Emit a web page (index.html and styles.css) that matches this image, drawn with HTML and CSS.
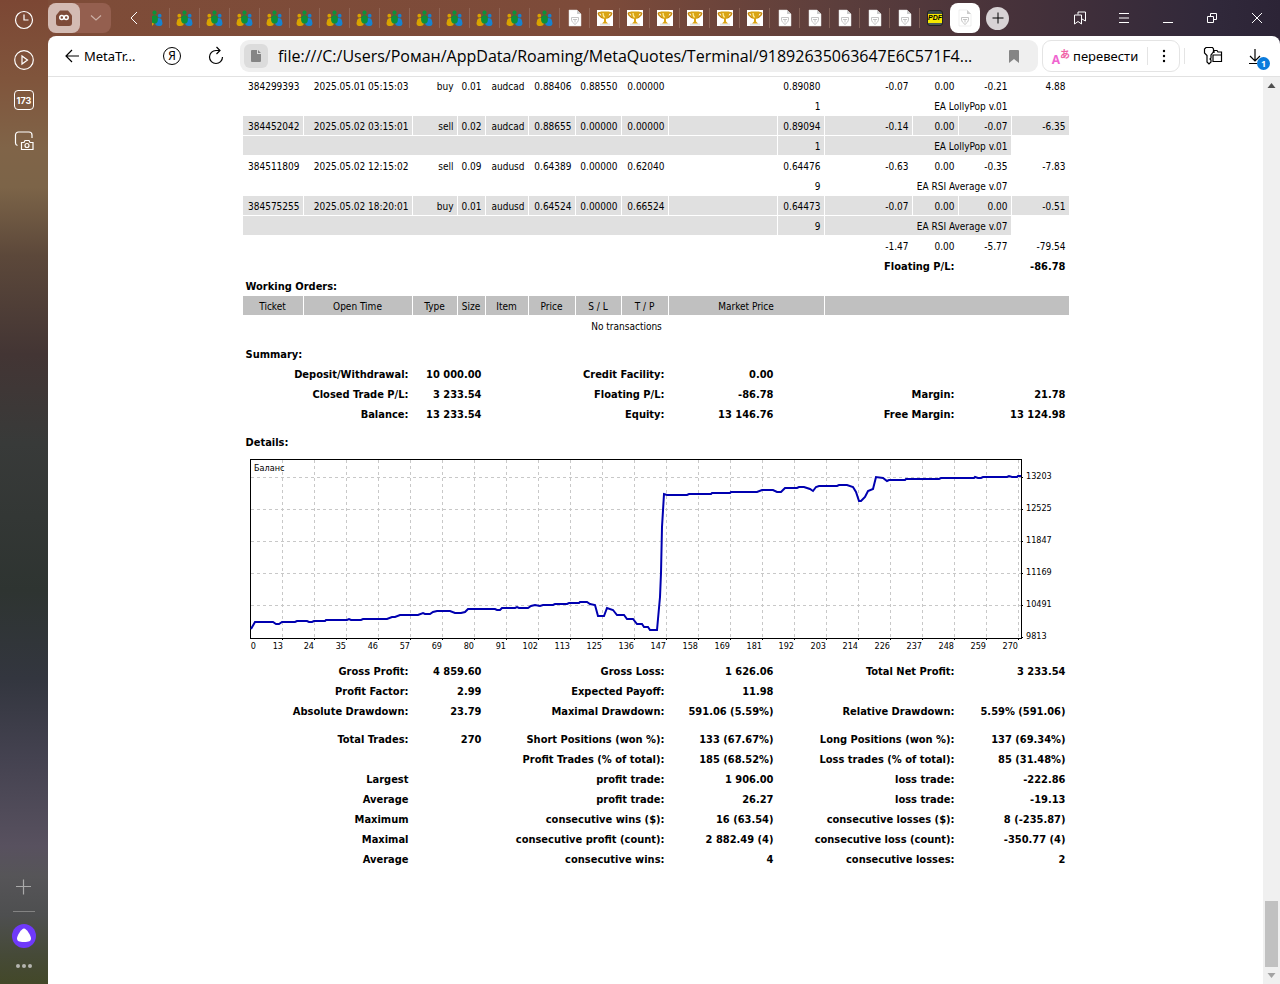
FILE: index.html
```html
<!DOCTYPE html>
<html lang="ru">
    <head>
        <meta charset="UTF-8" />
        <meta name="viewport" content="width=device-width, initial-scale=1.0" />
        <title>MetaTrader Statement</title>
        <link rel="stylesheet" href="styles.css">
    </head>
    <body>
        <svg class="defs" aria-hidden="true">
            <symbol id="people" viewBox="0 0 18 18">
                <circle cx="3.5" cy="6" r="2" fill="#d9a300" />
                <circle cx="14.5" cy="6" r="2" fill="#1583d0" />
                <path d="M1 12c0-2 1.500-3.500 3.500-3.500S8 10.500 8.500 13c0 3-1.500 4-4 4S.5 16 .5 14z" fill="#d9a300" />
                <path d="M17 12c0-2-1.500-3.500-3.500-3.500S10 10.500 9.500 13c0 3 1.500 4 4 4s4-1 4-3z" fill="#1583d0" />
                <circle cx="9" cy="2.800" r="2.200" fill="#0c9038" />
                <ellipse cx="9" cy="10" rx="3.6" ry="4.4" fill="#0c9038" />
            </symbol>
            <symbol id="doc" viewBox="0 0 16 18">
                <path d="M2 1h8l4 4v12H2z" fill="#fff" stroke="#ddd" stroke-width="0.5" />
                <path d="M10 1v4h4z" fill="#ccc" />
                <path d="M4.500 8.500h7v1.500c0 3-2 4-3.500 5.500-1.500-1.500-3.500-2.500-3.500-5.500zM6 10.500h4M8 10.500v3" fill="none" stroke="#c4c4c4" />
            </symbol>
            <symbol id="cup" viewBox="0 0 16 16">
                <path d="M0 0h16v16H0z" fill="#fff" />
                <path d="M3 13.500h10v2H3z" fill="#e4e4e4" />
                <path d="M4.500 3C1 2 .8 3.500 2 5s2.500 2.500 4.500 3M11.500 3C15 2 15.200 3.500 14 5s-2.500 2.500-4.500 3" fill="none" stroke="#c98a0a" stroke-width="1.500" />
                <path d="M3.500 1.500h9C12.500 6 11 8 9 9v2.500l2 2H5l2-2V9C5 8 3.500 6 3.500 1.500z" fill="#d9a413" />
                <path d="M6 3c0 2 .5 3.500 1.500 4.500" fill="none" stroke="#fff0a0" stroke-width="1.200" />
            </symbol>
        </svg>

        <nav class="sidebar">
            <button aria-label="История">
                <svg width="20" height="20"><circle cx="10" cy="10" r="8.500" /><path d="M10 4.500V10h4.500" /></svg>
            </button>
            <button aria-label="Видео">
                <svg width="20" height="20"><circle cx="10" cy="10" r="9.300" /><path d="M8 6v8l5.500-4z" /></svg>
            </button>
            <button class="counter">173</button>
            <button aria-label="Скриншот">
                <svg width="20" height="20"><path d="M3.500 15.500C1.500 15 1.500 14 1.500 13V5a3 3 0 0 1 3-3H15a3 3 0 0 1 3 3v3" /><path d="M7.500 12.500H10l1-2h4l1 2h3v7H7.500z" /><circle cx="13" cy="15.500" r="2" /></svg>
            </button>
            <div class="sidebar-bottom">
                <button aria-label="Добавить" class="dim">
                    <svg width="20" height="20"><path d="M9.500 2.500v15M2 9.500h15" /></svg>
                </button>
                <hr>
                <button aria-label="Алиса">
                    <svg width="24" height="24"><circle cx="12" cy="12" r="12" class="alice" /><path d="M12 4.500c2.500 0 7 7 7 10 0 2.500-2 3.500-7 3.500s-7-1-7-3.500c0-3 4.500-10 7-10z" class="white" /></svg>
                </button>
                <button aria-label="Ещё">
                    <svg width="20" height="20" class="dots"><circle cx="4" cy="10" r="2" /><circle cx="10" cy="10" r="2" /><circle cx="16" cy="10" r="2" /></svg>
                </button>
            </div>
        </nav>

        <div class="browser">
            <header class="tabs">
                <div class="group">
                    <button aria-label="Группа" class="group-icon">
                        <svg width="18" height="18"><path d="M5 1.500h8l4 5V14a3 3 0 0 1-3 3H4a3 3 0 0 1-3-3V6.500z" fill="#7d4a38" /><circle cx="6.800" cy="8.500" r="2" /><circle cx="11.200" cy="8.500" r="2" /></svg>
                    </button>
                    <button aria-label="Список" class="group-list">
                        <svg width="12" height="8"><path d="M1 1.500l5 4.500 5-4.500" /></svg>
                    </button>
                </div>
                <button aria-label="Назад" class="prev">
                    <svg width="10" height="16"><path d="M8 2L2 8l6 6" /></svg>
                </button>
                <button class="tab half"><svg width="17" height="17"><use href="#people" /></svg></button>
                <button class="tab"><svg width="17" height="17"><use href="#people" /></svg></button>
                <button class="tab"><svg width="17" height="17"><use href="#people" /></svg></button>
                <button class="tab"><svg width="17" height="17"><use href="#people" /></svg></button>
                <button class="tab"><svg width="17" height="17"><use href="#people" /></svg></button>
                <button class="tab"><svg width="17" height="17"><use href="#people" /></svg></button>
                <button class="tab"><svg width="17" height="17"><use href="#people" /></svg></button>
                <button class="tab"><svg width="17" height="17"><use href="#people" /></svg></button>
                <button class="tab"><svg width="17" height="17"><use href="#people" /></svg></button>
                <button class="tab"><svg width="17" height="17"><use href="#people" /></svg></button>
                <button class="tab"><svg width="17" height="17"><use href="#people" /></svg></button>
                <button class="tab"><svg width="17" height="17"><use href="#people" /></svg></button>
                <button class="tab"><svg width="17" height="17"><use href="#people" /></svg></button>
                <button class="tab"><svg width="17" height="17"><use href="#people" /></svg></button>
                <button class="tab"><svg width="16" height="18"><use href="#doc" /></svg></button>
                <button class="tab"><svg width="16" height="16"><use href="#cup" /></svg></button>
                <button class="tab"><svg width="16" height="16"><use href="#cup" /></svg></button>
                <button class="tab"><svg width="16" height="16"><use href="#cup" /></svg></button>
                <button class="tab"><svg width="16" height="16"><use href="#cup" /></svg></button>
                <button class="tab"><svg width="16" height="16"><use href="#cup" /></svg></button>
                <button class="tab"><svg width="16" height="16"><use href="#cup" /></svg></button>
                <button class="tab"><svg width="16" height="18"><use href="#doc" /></svg></button>
                <button class="tab"><svg width="16" height="18"><use href="#doc" /></svg></button>
                <button class="tab"><svg width="16" height="18"><use href="#doc" /></svg></button>
                <button class="tab"><svg width="16" height="18"><use href="#doc" /></svg></button>
                <button class="tab"><svg width="16" height="18"><use href="#doc" /></svg></button>
                <button class="tab last"><span class="pdf">PDF</span></button>
                <button class="tab active"><svg width="16" height="18"><use href="#doc" /></svg></button>
                <button class="new-tab" aria-label="Новая вкладка">
                    <svg width="12" height="12"><path d="M6 0.500v11M0.500 6h11" /></svg>
                </button>
                <div class="window-buttons">
                    <button aria-label="Закладки"><svg width="14" height="16"><path d="M1.500 5h7v9L5 11.500 1.500 14zM5 4.500V2h7.500v9L9 9" /></svg></button>
                    <button aria-label="Меню"><svg width="14" height="16"><path d="M2 3.500h10M2 8h10M2 12.500h10" /></svg></button>
                    <button aria-label="Свернуть"><svg width="14" height="16"><path d="M2 12.500h10" /></svg></button>
                    <button aria-label="Развернуть"><svg width="14" height="16"><path d="M2.500 6.500h6v6h-6zM5.500 6V3.500h6v6H9" /></svg></button>
                    <button aria-label="Закрыть"><svg width="14" height="16"><path d="M2 3l10 10M12 3L2 13" /></svg></button>
                </div>
            </header>

            <div class="window">
                <div class="toolbar">
                    <a href="#" class="back">
                        <svg width="16" height="16"><path d="M15 8H2M8 2L2 8l6 6" /></svg>
                        MetaTr...
                    </a>
                    <button class="yandex" aria-label="Яндекс"><span>Я</span></button>
                    <button class="reload" aria-label="Обновить">
                        <svg width="18" height="20"><path d="M9 4.500a6.500 6.500 0 1 0 6.500 6.500M9 4.500h3.500M9.500 1l3.500 3.500-3.500 3.500" /></svg>
                    </button>
                    <div class="address">
                        <span class="page-icon"><svg width="12" height="14"><path d="M1 2a1 1 0 0 1 1-1h5v4h4v7a1 1 0 0 1-1 1H2a1 1 0 0 1-1-1zM8 1l3 3H8z" /></svg></span>
                        <input type="text" aria-label="Адрес" value="file:///C:/Users/Роман/AppData/Roaming/MetaQuotes/Terminal/91892635063647E6C571F4...">
                        <svg width="12" height="14" class="mark"><path d="M1 2a1 1 0 0 1 1-1h8a1 1 0 0 1 1 1v12l-5-4-5 4z" /></svg>
                    </div>
                    <div class="translate">
                        <button class="translate-text"><span class="latin">A</span><span class="kana">あ</span>перевести</button>
                        <button class="more" aria-label="Ещё"><svg width="4" height="14"><circle cx="2" cy="2" r="1.200" /><circle cx="2" cy="7" r="1.200" /><circle cx="2" cy="12" r="1.200" /></svg></button>
                    </div>
                    <button class="passwords" aria-label="Пароли">
                        <svg width="20" height="20"><path d="M9.500 7L10.500 5.500V3L9.500 1.500H3L1.500 3v4L4 9.500V16l2 2 2-2v-2L7 13l1-1V9zM11 7V4.500h3l1 1.500h3.500v9.500H10V9h8" /></svg>
                    </button>
                    <button class="downloads" aria-label="Загрузки">
                        <svg width="14" height="18"><path d="M7 2v12M2 9l5 5 5-5M1 16.500h8" /></svg>
                        <span class="badge">1</span>
                    </button>
                </div>

                <div class="page">
                    <main>
                        <table>
                            <colgroup>
                                <col class="ticket"><col class="time"><col class="type"><col class="size"><col class="item">
                                <col class="price"><col class="sl"><col class="price"><col class="time"><col class="price">
                                <col class="commission"><col class="sl"><col class="swap"><col class="profit">
                            </colgroup>
                            <tbody>
                                <tr><td>384299393</td><td>2025.05.01 05:15:03</td><td>buy</td><td>0.01</td><td>audcad</td><td>0.88406</td><td>0.88550</td><td>0.00000</td><td></td><td>0.89080</td><td>-0.07</td><td>0.00</td><td>-0.21</td><td>4.88</td></tr>
                                <tr><td colspan="9"></td><td>1</td><td colspan="3">EA LollyPop v.01</td><td></td></tr>
                                <tr class="gray"><td>384452042</td><td>2025.05.02 03:15:01</td><td>sell</td><td>0.02</td><td>audcad</td><td>0.88655</td><td>0.00000</td><td>0.00000</td><td></td><td>0.89094</td><td>-0.14</td><td>0.00</td><td>-0.07</td><td>-6.35</td></tr>
                                <tr class="gray"><td colspan="9"></td><td>1</td><td colspan="3">EA LollyPop v.01</td></tr>
                                <tr><td>384511809</td><td>2025.05.02 12:15:02</td><td>sell</td><td>0.09</td><td>audusd</td><td>0.64389</td><td>0.00000</td><td>0.62040</td><td></td><td>0.64476</td><td>-0.63</td><td>0.00</td><td>-0.35</td><td>-7.83</td></tr>
                                <tr><td colspan="9"></td><td>9</td><td colspan="3">EA RSI Average v.07</td><td></td></tr>
                                <tr class="gray"><td>384575255</td><td>2025.05.02 18:20:01</td><td>buy</td><td>0.01</td><td>audusd</td><td>0.64524</td><td>0.00000</td><td>0.66524</td><td></td><td>0.64473</td><td>-0.07</td><td>0.00</td><td>0.00</td><td>-0.51</td></tr>
                                <tr class="gray"><td colspan="9"></td><td>9</td><td colspan="3">EA RSI Average v.07</td></tr>
                                <tr><td colspan="10"></td><td>-1.47</td><td>0.00</td><td>-5.77</td><td>-79.54</td></tr>
                                <tr class="bold"><td colspan="10"></td><td colspan="2">Floating P/L:</td><td colspan="2">-86.78</td></tr>
                                <tr class="bold title"><td colspan="14">Working Orders:</td></tr>
                                <tr class="head"><th>Ticket</th><th>Open Time</th><th>Type</th><th>Size</th><th>Item</th><th>Price</th><th>S / L</th><th>T / P</th><th colspan="2">Market Price</th><th colspan="4"></th></tr>
                                <tr class="center"><td colspan="13">No transactions</td><td></td></tr>
                                <tr class="gap"><td colspan="14"></td></tr>
                                <tr class="bold title"><td colspan="14">Summary:</td></tr>
                                <tr class="bold"><td colspan="2">Deposit/Withdrawal:</td><td colspan="2">10 000.00</td><td colspan="4">Credit Facility:</td><td>0.00</td><td colspan="5"></td></tr>
                                <tr class="bold"><td colspan="2">Closed Trade P/L:</td><td colspan="2">3 233.54</td><td colspan="4">Floating P/L:</td><td>-86.78</td><td colspan="3">Margin:</td><td colspan="2">21.78</td></tr>
                                <tr class="bold"><td colspan="2">Balance:</td><td colspan="2">13 233.54</td><td colspan="4">Equity:</td><td>13 146.76</td><td colspan="3">Free Margin:</td><td colspan="2">13 124.98</td></tr>
                                <tr class="gap"><td colspan="14"></td></tr>
                                <tr class="bold title"><td colspan="14">Details:</td></tr>
                                <tr class="chart">
                                    <td colspan="14">
                                        <svg viewBox="0 0 820 202" width="820" height="202">
                                            <path class="grid" d="M5 22.500h770M5 54.500h770M5 86.500h770M5 118.500h770M5 150.500h770" />
                                            <path class="grid" d="M36.500 5v178M68.500 5v178M100.500 5v178M132.500 5v178M164.500 5v178M196.500 5v178M228.500 5v178M260.500 5v178M292.500 5v178M324.500 5v178M356.500 5v178M388.500 5v178M420.500 5v178M452.500 5v178M484.500 5v178M516.500 5v178M548.500 5v178M580.500 5v178M612.500 5v178M644.500 5v178M676.500 5v178M708.500 5v178M740.500 5v178M772.500 5v178" />
                                            <rect class="frame" x="4.500" y="4.500" width="771" height="179" />
                                            <path class="frame" d="M775 22.500h2M775 54.500h2M775 86.500h2M775 118.500h2M775 150.500h2M775 182.500h2" />
                                            <path class="frame" d="M36.500 183v2M68.500 183v2M100.500 183v2M132.500 183v2M164.500 183v2M196.500 183v2M228.500 183v2M260.500 183v2M292.500 183v2M324.500 183v2M356.500 183v2M388.500 183v2M420.500 183v2M452.500 183v2M484.500 183v2M516.500 183v2M548.500 183v2M580.500 183v2M612.500 183v2M644.500 183v2M676.500 183v2M708.500 183v2M740.500 183v2M772.500 183v2" />
                                            <polyline class="balance" points="5,174 9,167 27,167 30,169 33,169 36,167 49,167 51,166 61,166 63,167 66,167 68,166 79,166 80,165 101,165 103,164 105,165 115,165 117,164 141,164 146,162 149,162 154,160 172,160 177,158 179,159 184,159 187,157 191,156 204,156 209,158 215,158 219,157 222,154 249,154 251,155 254,155 256,153 269,153 271,152 273,153 282,153 285,151 289,150 294,151 297,150 307,150 309,149 321,149 323,148 333,148 334,147 341,147 344,149 349,150 352,161 358,161 361,153 367,155 371,160 378,160 381,164 387,164 391,169 396,169 398,172 402,172 404,175 411,175 412,164 414,142 415,118 416,72 418,39 421,40 441,40 443,39 465,39 466,38 484,38 485,37 511,37 516,35 527,35 531,37 535,37 539,33 551,33 553,32 558,32 564,34 567,36 570,32 573,31 591,31 593,30 601,30 607,32 610,37 613,46 615,46 619,42 622,36 627,34 630,22 637,23 641,26 643,25 659,25 660,24 693,24 695,23 728,23 729,22 732,23 735,23 737,22 761,22 763,21 766,22 771,22 772,21 775,21" />
                                            <text x="8" y="16">Баланс</text>
                                            <g>
                                                <text x="780" y="24">13203</text><text x="780" y="56">12525</text><text x="780" y="88">11847</text><text x="780" y="120">11169</text><text x="780" y="152">10491</text><text x="780" y="184">9813</text>
                                            </g>
                                            <g text-anchor="end">
                                                <text x="10" y="194">0</text><text x="37" y="194">13</text><text x="68" y="194">24</text><text x="100" y="194">35</text><text x="132" y="194">46</text><text x="164" y="194">57</text><text x="196" y="194">69</text><text x="228" y="194">80</text><text x="260" y="194">91</text><text x="292" y="194">102</text><text x="324" y="194">113</text><text x="356" y="194">125</text><text x="388" y="194">136</text><text x="420" y="194">147</text><text x="452" y="194">158</text><text x="484" y="194">169</text><text x="516" y="194">181</text><text x="548" y="194">192</text><text x="580" y="194">203</text><text x="612" y="194">214</text><text x="644" y="194">226</text><text x="676" y="194">237</text><text x="708" y="194">248</text><text x="740" y="194">259</text><text x="772" y="194">270</text>
                                            </g>
                                        </svg>
                                    </td>
                                </tr>
                                <tr class="bold"><td colspan="2">Gross Profit:</td><td colspan="2">4 859.60</td><td colspan="4">Gross Loss:</td><td>1 626.06</td><td colspan="3">Total Net Profit:</td><td colspan="2">3 233.54</td></tr>
                                <tr class="bold"><td colspan="2">Profit Factor:</td><td colspan="2">2.99</td><td colspan="4">Expected Payoff:</td><td>11.98</td><td colspan="5"></td></tr>
                                <tr class="bold"><td colspan="2">Absolute Drawdown:</td><td colspan="2">23.79</td><td colspan="4">Maximal Drawdown:</td><td>591.06 (5.59%)</td><td colspan="3">Relative Drawdown:</td><td colspan="2">5.59% (591.06)</td></tr>
                                <tr class="gap"><td colspan="14"></td></tr>
                                <tr class="bold"><td colspan="2">Total Trades:</td><td colspan="2">270</td><td colspan="4">Short Positions (won %):</td><td>133 (67.67%)</td><td colspan="3">Long Positions (won %):</td><td colspan="2">137 (69.34%)</td></tr>
                                <tr class="bold"><td colspan="4"></td><td colspan="4">Profit Trades (% of total):</td><td>185 (68.52%)</td><td colspan="3">Loss trades (% of total):</td><td colspan="2">85 (31.48%)</td></tr>
                                <tr class="bold"><td colspan="2">Largest</td><td colspan="2"></td><td colspan="4">profit trade:</td><td>1 906.00</td><td colspan="3">loss trade:</td><td colspan="2">-222.86</td></tr>
                                <tr class="bold"><td colspan="2">Average</td><td colspan="2"></td><td colspan="4">profit trade:</td><td>26.27</td><td colspan="3">loss trade:</td><td colspan="2">-19.13</td></tr>
                                <tr class="bold"><td colspan="2">Maximum</td><td colspan="2"></td><td colspan="4">consecutive wins ($):</td><td>16 (63.54)</td><td colspan="3">consecutive losses ($):</td><td colspan="2">8 (-235.87)</td></tr>
                                <tr class="bold"><td colspan="2">Maximal</td><td colspan="2"></td><td colspan="4">consecutive profit (count):</td><td>2 882.49 (4)</td><td colspan="3">consecutive loss (count):</td><td colspan="2">-350.77 (4)</td></tr>
                                <tr class="bold"><td colspan="2">Average</td><td colspan="2"></td><td colspan="4">consecutive wins:</td><td>4</td><td colspan="3">consecutive losses:</td><td colspan="2">2</td></tr>
                            </tbody>
                        </table>
                    </main>
                    <div class="scrollbar">
                        <svg width="9" height="17"><path d="M0.500 11h8l-4-5z" fill="#505050" /></svg>
                        <div class="thumb"></div>
                        <svg width="9" height="17"><path d="M0.500 6h8l-4 5z" fill="#a3a3a3" /></svg>
                    </div>
                </div>
            </div>
        </div>
    </body>
</html>
```

FILE: styles.css
```css
* {
    box-sizing: border-box;
}
body {
    margin: 0;
    height: 100vh;
    display: flex;
    overflow: hidden;
    background-color: #7c4936;
    font-family: "Noto Sans", sans-serif;
}
button {
    display: flex;
    align-items: center;
    justify-content: center;
    padding: 0;
    border: none;
    background: none;
    color: inherit;
    font-family: inherit;
}
svg {
    display: block;
    flex: none;
    fill: none;
    stroke: black;
}
.defs {
    position: absolute;
    width: 0;
    height: 0;
}

/* left panel */
.sidebar {
    flex: none;
    width: 48px;
    display: flex;
    flex-direction: column;
    align-items: center;
    background: linear-gradient(#7c4734 0%, #80553c 8%, #806448 15%, #7c6448 19%, #5c483a 26%, #433534 36%, #383a39 45%, #2e3431 60%, #33363f 69%, #444250 77%, #58515f 86%, #565558 89%, #4e4f50 93%, #464a38 97%, #434829 100%);
}
.sidebar svg {
    stroke: white;
    stroke-width: 1.2;
}
.sidebar button {
    width: 40px;
    height: 40px;
}
.sidebar .counter {
    width: 20px;
    height: 20px;
    margin: 10px 0;
    border: 1px solid white;
    border-radius: 4px;
    color: white;
    font: bold 9px Inter, sans-serif;
}
.sidebar-bottom {
    margin-top: auto;
    display: flex;
    flex-direction: column;
    align-items: center;
}
.sidebar-bottom hr {
    width: 22px;
    height: 1px;
    margin: 4px 0;
    border: none;
    background-color: #838383;
}
.sidebar-bottom .dim svg {
    stroke: #aaa;
}
.sidebar-bottom .alice {
    fill: #6f39fa;
    stroke: none;
}
.sidebar-bottom .white {
    fill: white;
    stroke: none;
}
.sidebar-bottom button:last-child {
    height: 28px;
    padding-bottom: 8px;
}
.sidebar .dots {
    fill: #b5b5b0;
    stroke: none;
}

/* tabs */
.browser {
    flex: 1;
    min-width: 0;
    display: flex;
    flex-direction: column;
    background: linear-gradient(90deg, #7e4c38 0%, #7d4b3a 45%, #5c3e3c 64%, #47323a 78%, #30283a 95%, #2c2436 100%);
}
.tabs {
    height: 36px;
    flex: none;
    display: flex;
    align-items: center;
}
.group {
    display: flex;
    width: 63px;
    height: 30px;
    border-radius: 8px;
    background-color: #945f4f;
}
.group-icon {
    width: 32px;
    border-radius: 8px;
    background-color: #d3bbb3;
}
.group-icon svg {
    stroke: #7d4a38;
    stroke-width: 0;
}
.group-icon circle {
    stroke: white;
    stroke-width: 1.5;
}
.group-list {
    flex: 1;
}
.group-list svg {
    stroke: #cbb0a6;
    stroke-width: 1.2;
}
.prev {
    width: 41px;
    height: 30px;
    padding-left: 4px;
}
.prev svg,
.window-buttons svg {
    stroke: white;
}
.tab {
    width: 30px;
    height: 20px;
    flex: none;
    border-right: 1px solid #a27d6e80;
}
.tab svg {
    stroke: none;
}
.tab.half {
    width: 18px;
    overflow: hidden;
    justify-content: flex-end;
    padding-right: 6px;
}
.tab.last {
    border: none;
}
.tab.active {
    height: 30px;
    border: none;
    border-radius: 8px;
    background-color: white;
}
.pdf {
    width: 16px;
    height: 16px;
    border: 1px solid #222;
    border-radius: 3px;
    background: linear-gradient(#3d4a4a 3px, #f5e800 3px, #f5e800 12px, #4d5c55 12px);
    color: black;
    font: italic bold 7px/14px "Liberation Sans", sans-serif;
}
.new-tab {
    width: 23px;
    height: 23px;
    margin-left: 6px;
    border-radius: 50%;
    background-color: #d8d3d5;
}
.window-buttons {
    display: flex;
    margin-left: auto;
}
.window-buttons button {
    width: 44px;
    height: 36px;
}
.window-buttons button:last-child {
    width: 46px;
}

/* toolbar */
.window {
    flex: 1;
    min-height: 0;
    display: flex;
    flex-direction: column;
    border-radius: 8px 8px 0 0;
    background-color: white;
}
.toolbar {
    flex: none;
    height: 41px;
    padding: 0 8px 0 16px;
    display: flex;
    align-items: center;
    border-bottom: 1px solid #e2e2e2;
    font-size: 13px;
}
.toolbar svg {
    stroke-width: 1.2;
}
.back {
    display: flex;
    align-items: center;
    gap: 4px;
    width: 99px;
    color: black;
    text-decoration: none;
}
.yandex span {
    width: 18px;
    height: 18px;
    border: 1px solid black;
    border-radius: 50%;
    font-size: 12px;
    line-height: 16px;
}
.reload {
    margin: 0 15px 0 26px;
}
.address {
    flex: 1;
    display: flex;
    align-items: center;
    height: 32px;
    padding: 0 18px 0 4px;
    border-radius: 9px;
    background-color: #efefef;
}
.page-icon {
    display: flex;
    align-items: center;
    justify-content: center;
    width: 24px;
    height: 24px;
    border-radius: 6px;
    background-color: #dcdcdc;
}
.address svg {
    fill: #858585;
    stroke: none;
}
.address input {
    flex: 1;
    min-width: 0;
    padding: 0 10px;
    border: none;
    outline: none;
    background: none;
    font: 16px "Open Sans", sans-serif;
}
.translate {
    display: flex;
    height: 32px;
    margin-left: 4px;
    border: 1px solid #e4e4e4;
    border-radius: 9px;
}
.translate-text {
    width: 104px;
    font-size: 13px;
}
.latin {
    padding-top: 6px;
    color: #f065d0;
    font-size: 12px;
    font-weight: bold;
}
.kana {
    padding-bottom: 6px;
    margin-right: 3px;
    color: #f065a8;
    font: bold 10px "Noto Sans CJK JP", sans-serif;
}
.more {
    width: 32px;
    height: 18px;
    align-self: center;
    border-left: 1px solid #e4e4e4;
}
.more svg {
    fill: black;
    stroke: none;
}
.passwords {
    width: 48px;
    height: 16px;
    margin-left: 4px;
    border-left: 1px solid #e4e4e4;
    padding-left: 8px;
}
.downloads {
    position: relative;
    justify-content: flex-start;
    width: 24px;
    height: 24px;
    margin-left: 16px;
}
.badge {
    position: absolute;
    right: 2px;
    bottom: -2px;
    width: 13px;
    height: 13px;
    border-radius: 50%;
    background-color: #0b7bdc;
    color: white;
    font: bold 9px/13px "Noto Sans", sans-serif;
}

/* statement */
.page {
    flex: 1;
    min-height: 0;
    display: flex;
}
main {
    flex: 1;
    min-width: 0;
    overflow: hidden;
}
table {
    width: 828px;
    margin: -2px auto 0;
    table-layout: fixed;
    border-spacing: 1px;
    font: 10px/13px "DejaVu Sans Condensed", "DejaVu Sans", sans-serif;
}
.ticket { width: 60px; }
.time { width: 108px; }
.type { width: 44px; }
.size { width: 27px; }
.item { width: 42px; }
.price { width: 46px; }
.sl { width: 45px; }
.commission { width: 87px; }
.swap { width: 52px; }
.profit { width: 57px; }
td,
th {
    height: 19px;
    padding: 4px 3px 2px;
    text-align: right;
    white-space: nowrap;
    font-weight: normal;
}
.gray td {
    background-color: #e0e0e0;
}
.head th {
    background-color: #c0c0c0;
    text-align: center;
}
.center td {
    text-align: center;
}
.bold td {
    font-size: 11px;
    font-weight: bold;
}
.title td {
    text-align: left;
}
.gap td {
    height: 7px;
    padding: 0;
}
.chart td {
    padding: 3px;
}
.chart svg {
    font-size: 9px;
}
.chart text {
    fill: black;
    stroke: none;
}
.chart .grid {
    stroke: #c8c8c8;
    stroke-dasharray: 3 3;
}
.chart .frame {
    stroke: black;
}
.chart .balance {
    stroke: #0000b0;
    stroke-width: 2;
}
.scrollbar {
    width: 17px;
    flex: none;
    display: flex;
    flex-direction: column;
    align-items: center;
    background-color: #f0f0f0;
}
.scrollbar svg {
    stroke: none;
}
.thumb {
    width: 13px;
    height: 66px;
    margin-top: auto;
    background-color: #c1c1c1;
}
```
